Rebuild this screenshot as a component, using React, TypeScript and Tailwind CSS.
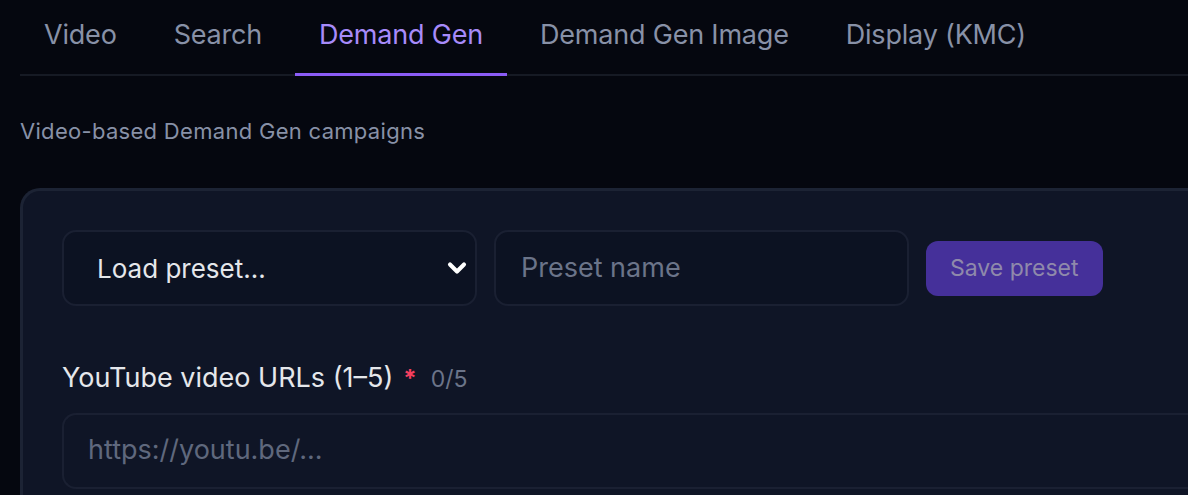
import { ChevronDown } from 'lucide-react'

const tabs = ['Video', 'Search', 'Demand Gen', 'Demand Gen Image', 'Display (KMC)']

const App = () => {
  const active = 'Demand Gen'

  return (
    <div className="min-h-screen w-full overflow-hidden bg-[#05070f] font-['Inter',sans-serif] pl-5">
      {/* Tabs */}
      <div className="flex gap-[9px] border-b-2 border-[#161a24]">
        {tabs.map((t) => (
          <div
            key={t}
            className={`-mb-[2px] flex h-[76px] items-center border-b-[3px] px-6 pb-[3px] text-[27px] tracking-[-0.2px] ${
              t === active ? 'border-[#8b5cf6] text-[#a78bfa]' : 'border-transparent text-[#8891a7]'
            }`}
          >
            {t}
          </div>
        ))}
      </div>

      <p className="mt-[39px] text-[22px] text-[#8891a7] tracking-[0.3px]">Video-based Demand Gen campaigns</p>

      {/* Card */}
      <div className="mt-[40px] w-[1300px] rounded-tl-[20px] border-l-[3px] border-t-[3px] border-[#1c2334] bg-[#0f1526] pl-[39px] pt-[39px] pb-10">
        <div className="flex items-center gap-[17px]">
          <div className="flex h-[76px] w-[415px] items-center justify-between rounded-[14px] border-2 border-[#1a2032] bg-[#0c1222] pl-[33px] pr-[4px]">
            <span className="text-[26px] text-[#e5e7eb]">Load preset...</span>
            <ChevronDown className="h-[28px] w-[28px] text-white" strokeWidth={3.5} />
          </div>
          <div className="flex h-[76px] w-[415px] items-center rounded-[14px] border-2 border-[#1a2032] bg-[#0c1222] pl-[25px]">
            <span className="text-[27px] text-[#6b7489]">Preset name</span>
          </div>
          <button className="h-[55px] rounded-[12px] bg-[#45309a] px-6 text-[23px] text-[#8f89ab]">
            Save preset
          </button>
        </div>

        <div className="mt-[52px] flex items-baseline">
          <span className="text-[27px] text-[#e5e7eb]">YouTube video URLs (1–5)</span>
          <span className="ml-[10px] text-[24px] font-bold text-[#f43f5e]">*</span>
          <span className="ml-[14px] text-[23px] text-[#6b7489]">0/5</span>
        </div>

        <div className="mt-[14px] flex h-[76px] w-full items-center rounded-l-[14px] border-2 border-r-0 border-[#1a2032] bg-[#0f1526] pl-[24px]">
          <span className="text-[27px] text-[#5f687d]">https://youtu.be/...</span>
        </div>
      </div>
    </div>
  )
}

export default App
